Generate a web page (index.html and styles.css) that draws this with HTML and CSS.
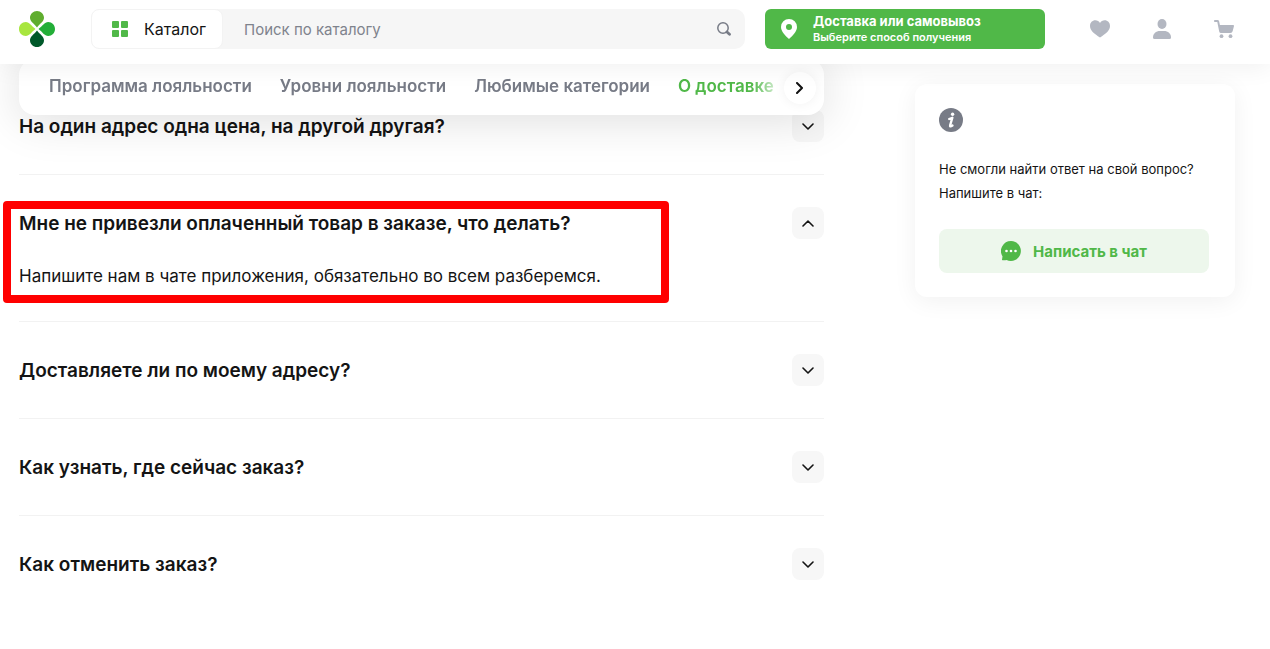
FILE: index.html
```html
<!DOCTYPE html>
<html lang="ru">
<head>
<meta charset="utf-8">
<meta name="viewport" content="width=device-width, initial-scale=1">
<title>Вопросы о доставке</title>
<link rel="stylesheet" href="styles.css">
</head>
<body>
<header class="header">
  <a class="logo" href="#" aria-label="На главную">
    <svg width="36" height="36" viewBox="0 0 36 36" aria-hidden="true">
      <path fill="#5fad2e" d="M18 16.500C15 12.500 11 10.500 11 6.800C11 3 14.200 0 18 0s7 3 7 6.800c0 3.700-4 5.700-7 9.700z"/>
      <path fill="#23ae38" d="M19.500 18C23.500 15 25.500 11 29.200 11C33 11 36 14.200 36 18s-3 7-6.800 7c-3.700 0-5.700-4-9.700-7z"/>
      <path fill="#00592a" d="M18 19.500C21 23.500 25 25.500 25 29.200C25 33 21.800 36 18 36s-7-3-7-6.800c0-3.700 4-5.700 7-9.700z"/>
      <path fill="#a8e63f" d="M16.500 18C12.500 21 10.500 25 6.800 25C3 25 0 21.800 0 18s3-7 6.800-7c3.700 0 5.700 4 9.700 7z"/>
    </svg>
  </a>
  <form class="search">
    <button class="catalog" type="button">
      <svg width="16" height="16" viewBox="0 0 16 16" fill="#50b848" aria-hidden="true">
        <rect width="7" height="7" rx="1"/><rect x="9" width="7" height="7" rx="1"/><rect y="9" width="7" height="7" rx="1"/><rect x="9" y="9" width="7" height="7" rx="1"/>
      </svg>
      Каталог
    </button>
    <input class="search-input" type="text" placeholder="Поиск по каталогу" aria-label="Поиск по каталогу">
    <button class="search-button" type="submit" aria-label="Найти">
      <svg width="14" height="14" viewBox="0 0 14 14" fill="none" stroke="#777b86" aria-hidden="true">
        <circle cx="6" cy="6" r="5.200" stroke-width="1.500"/><path d="M10 10l2.500 2.300" stroke-width="2.800" stroke-linecap="round"/>
      </svg>
    </button>
  </form>
  <button class="delivery" type="button">
    <svg width="16" height="20" viewBox="0 0 16 20" fill="#fff" aria-hidden="true"><path fill-rule="evenodd" d="M8 0a8 8 0 0 0-8 8c0 4.500 4.500 9 8 12c3.500-3 8-7.500 8-12a8 8 0 0 0-8-8zm0 5a3 3 0 1 1 0 6a3 3 0 0 1 0-6z"/></svg>
    <span class="delivery-text"><strong class="delivery-title">Доставка или самовывоз</strong><span class="delivery-note">Выберите способ получения</span></span>
  </button>
  <nav class="user-links" aria-label="Личное меню">
    <a href="#" aria-label="Избранное"><svg width="20" height="18" viewBox="0 0 20 18" fill="#b3b7c1" aria-hidden="true"><path d="M10 17.500C4.500 13.800 0 10.500 0 5.900C0 2.600 2.400.3 5.300.3C7.300.3 9 1.300 10 2.900C11 1.300 12.700.3 14.700.3C17.600.3 20 2.600 20 5.900c0 4.600-4.500 7.900-10 11.600z"/></svg></a>
    <a href="#" aria-label="Профиль"><svg width="18" height="20" viewBox="0 0 18 20" fill="#b3b7c1" aria-hidden="true"><ellipse cx="9" cy="5" rx="4.500" ry="5"/><path d="M0 18.500C0 14.500 3 12 7 12h4c4 0 7 2.500 7 6.500q0 1.500-1.500 1.500h-15Q0 20 0 18.500z"/></svg></a>
    <a href="#" aria-label="Корзина"><svg width="20" height="20" viewBox="0 0 20 20" fill="#b3b7c1" aria-hidden="true"><path d="M.8 1H3.500Q4.800 1 5.100 2.300L5.900 6H19.200Q20.200 6 20 7L18.700 12Q18.300 14 16.300 14H7Q5.500 14 5.200 12.500L3.300 3H.8Q0 3 0 2T.8 1z"/><circle cx="7.500" cy="17.200" r="1.900"/><circle cx="16.500" cy="17.200" r="1.900"/></svg></a>
  </nav>
</header>

<main class="page">
  <div class="content">
    <nav class="tabs" aria-label="Разделы">
      <div class="tab-list">
        <a class="tab" href="#">Программа лояльности</a>
        <a class="tab" href="#">Уровни лояльности</a>
        <a class="tab" href="#">Любимые категории</a>
        <a class="tab tab-active" href="#">О доставке</a>
      </div>
      <button class="tabs-next" type="button" aria-label="Следующие разделы">
        <svg width="8" height="12" viewBox="0 0 8 12" fill="none" stroke="#111" stroke-width="2" stroke-linecap="round" stroke-linejoin="round" aria-hidden="true"><path d="M1 1l5 5-5 5"/></svg>
      </button>
    </nav>
    <section class="faq" aria-label="Вопросы и ответы">
      <article class="item">
        <div class="item-head"><h2 class="question">На один адрес одна цена, на другой другая?</h2>
          <button class="toggle" type="button" aria-label="Показать ответ"><svg class="chevron" viewBox="0 0 12 7" aria-hidden="true"><path d="M1 1l5 5 5-5"/></svg></button></div>
      </article>
      <article class="item">
        <div class="item-head"><h2 class="question">Мне не привезли оплаченный товар в заказе, что делать?</h2>
          <button class="toggle" type="button" aria-expanded="true" aria-label="Скрыть ответ"><svg class="chevron" viewBox="0 0 12 7" aria-hidden="true"><path d="M1 6l5-5 5 5"/></svg></button></div>
        <p class="answer">Напишите нам в чате приложения, обязательно во всем разберемся.</p>
        <div class="highlight"></div>
      </article>
      <article class="item">
        <div class="item-head"><h2 class="question">Доставляете ли по моему адресу?</h2>
          <button class="toggle" type="button" aria-label="Показать ответ"><svg class="chevron" viewBox="0 0 12 7" aria-hidden="true"><path d="M1 1l5 5 5-5"/></svg></button></div>
      </article>
      <article class="item">
        <div class="item-head"><h2 class="question">Как узнать, где сейчас заказ?</h2>
          <button class="toggle" type="button" aria-label="Показать ответ"><svg class="chevron" viewBox="0 0 12 7" aria-hidden="true"><path d="M1 1l5 5 5-5"/></svg></button></div>
      </article>
      <article class="item">
        <div class="item-head"><h2 class="question">Как отменить заказ?</h2>
          <button class="toggle" type="button" aria-label="Показать ответ"><svg class="chevron" viewBox="0 0 12 7" aria-hidden="true"><path d="M1 1l5 5 5-5"/></svg></button></div>
      </article>
    </section>
  </div>
  <aside class="help">
    <svg class="help-icon" width="24" height="24" viewBox="0 0 24 24" aria-hidden="true"><circle cx="12" cy="12" r="12" fill="#777b86"/><circle cx="13.600" cy="6.300" r="1.700" fill="#fff"/><path d="M10.200 11L13.400 9.700l-2.300 7.700q-.3 1.400 1 .9l1.400-.8" fill="none" stroke="#fff" stroke-width="2.300" stroke-linecap="round" stroke-linejoin="round"/></svg>
    <p class="help-text">Не смогли найти ответ на свой вопрос?<br>Напишите в чат:</p>
    <button class="chat" type="button">
      <svg width="20" height="20" viewBox="0 0 20 20" aria-hidden="true"><path fill="#50b848" d="M10 0a10 10 0 1 1-4.500 19Q3.500 19.500 1.500 19.200Q.7 19 1.100 18.200L1.500 15.300A10 10 0 0 1 10 0z"/><g fill="#fff"><circle cx="5.500" cy="10" r="1.300"/><circle cx="10" cy="10" r="1.300"/><circle cx="14.500" cy="10" r="1.300"/></g></svg>
      Написать в чат
    </button>
  </aside>
</main>
</body>
</html>
```
FILE: styles.css
```css
* {
  box-sizing: border-box;
}

body {
  margin: 0;
  background: #fff;
  color: #141414;
  font-family: Inter, "Liberation Sans", sans-serif;
}

button,
input {
  margin: 0;
  padding: 0;
  border: 0;
  background: none;
  color: inherit;
  font: inherit;
}

button {
  cursor: pointer;
}

svg {
  display: block;
  flex: none;
}

.header {
  position: sticky;
  top: 0;
  z-index: 3;
  display: flex;
  align-items: center;
  height: 64px;
  padding: 0 36px 6px 19px;
  background: #fff;
  box-shadow: 0 4px 24px rgba(0, 0, 0, 0.06);
}

.search {
  display: flex;
  flex: 1;
  align-items: center;
  height: 40px;
  margin: 0 20px 0 36px;
  border-radius: 10px;
  background: #f6f6f6;
}

.catalog {
  display: flex;
  align-items: center;
  justify-content: center;
  gap: 16px;
  width: 132px;
  height: 40px;
  padding-left: 4px;
  border: 1px solid #f3f3f3;
  border-radius: 8px;
  background: #fff;
  font-size: 16px;
}

.search-input {
  flex: 1;
  min-width: 0;
  height: 40px;
  padding-left: 21px;
  font-size: 15px;
}

.search-input::placeholder {
  color: #7f838d;
  opacity: 1;
}

.search-button {
  display: grid;
  place-items: center;
  width: 42px;
  height: 40px;
}

.delivery {
  display: flex;
  align-items: center;
  gap: 16px;
  width: 280px;
  height: 40px;
  padding-left: 16px;
  border-radius: 6px;
  background: #50b848;
  color: #fff;
  text-align: left;
}

.delivery-text {
  display: flex;
  flex-direction: column;
  line-height: 16px;
}

.delivery-title {
  font-size: 13px;
  font-weight: 700;
}

.delivery-note {
  font-size: 11px;
  font-weight: 600;
}

.user-links {
  display: flex;
  align-items: center;
  justify-content: space-between;
  width: 144px;
  margin-left: 45px;
}

.page {
  display: grid;
  grid-template-columns: minmax(0, 1fr) 320px;
  align-items: start;
  gap: 91px;
  padding: 0 35px 48px 19px;
}

.tabs {
  position: sticky;
  top: 59px;
  z-index: 2;
  display: flex;
  align-items: center;
  height: 56px;
  margin-top: -5px;
  padding: 2px 8px 0 30px;
  border-radius: 16px;
  background: #fff;
  box-shadow: 0 4px 48px rgba(0, 0, 0, 0.14);
}

.tab-list {
  display: flex;
  flex: 1;
  gap: 28px;
  min-width: 0;
  padding-bottom: 4px;
  overflow: hidden;
  mask-image: linear-gradient(to left, transparent, #000 32px);
}

.tab {
  color: #777b86;
  font-size: 17px;
  font-weight: 600;
  line-height: 24px;
  text-decoration: none;
  white-space: nowrap;
}

.tab-active {
  color: #50b848;
}

.tabs-next {
  display: grid;
  flex: none;
  place-items: center;
  width: 32px;
  height: 32px;
  border-radius: 50%;
  background: #fff;
  box-shadow: 0 0 12px rgba(0, 0, 0, 0.06);
}

.faq {
  margin-top: -37px;
}

.item {
  position: relative;
  padding: 32px 0;
  border-bottom: 1px solid #f2f2f2;
}

.item:last-child {
  border-bottom: 0;
}

.item-head {
  display: flex;
  align-items: center;
  justify-content: space-between;
}

.question {
  margin: 0;
  padding-top: 2px;
  font-size: 19px;
  font-weight: 600;
  line-height: 24px;
}

.toggle {
  display: grid;
  flex: none;
  place-items: center;
  width: 32px;
  height: 32px;
  border-radius: 8px;
  background: #f7f7f7;
}

.chevron {
  width: 12px;
  height: 7px;
  fill: none;
  stroke: #141414;
  stroke-width: 1.6;
  stroke-linecap: round;
  stroke-linejoin: round;
}

.answer {
  margin: 24px 0 0;
  font-size: 17px;
  line-height: 26px;
}

.highlight {
  position: absolute;
  top: 26px;
  bottom: 18px;
  left: -16px;
  width: 666px;
  border: 8px solid #f00;
  border-radius: 4px;
  pointer-events: none;
}

.help {
  margin-top: 20px;
  padding: 24px 26px 24px 24px;
  border-radius: 12px;
  background: #fff;
  box-shadow: 0 4px 24px rgba(0, 0, 0, 0.06);
}

.help-text {
  margin: 25px 0 24px;
  font-size: 13px;
  line-height: 24px;
}

.chat {
  display: flex;
  align-items: center;
  justify-content: center;
  gap: 12px;
  width: 100%;
  height: 44px;
  border-radius: 8px;
  background: #edf7ec;
  color: #50b848;
  font-size: 15px;
  font-weight: 700;
}
```
